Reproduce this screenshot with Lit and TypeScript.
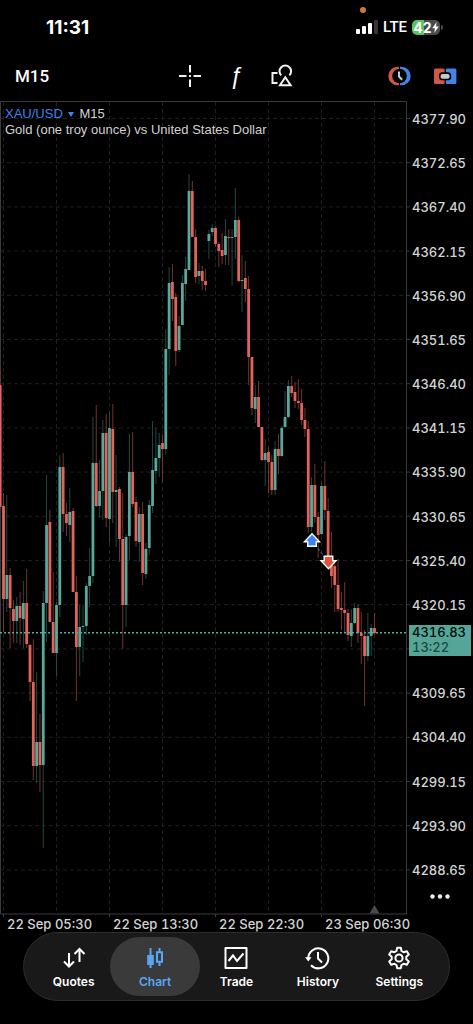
import { LitElement, html, svg, css } from "lit";
import { customElement, state } from "lit/decorators.js";

type Candle = [string, number, number, number, number];

// direction, high, body top, body bottom, low (plot units, one candle per slot)
const CANDLES: Candle[] = [
  ["d", 370, 385, 507, 507], ["d", 493, 506, 599, 632], ["u", 495, 575, 599, 612], ["d", 568, 575, 608, 648],
  ["d", 600, 609, 621, 643], ["u", 597, 606, 621, 643], ["d", 592, 606, 618, 645], ["u", 581, 603, 619, 648],
  ["d", 569, 603, 644, 648], ["d", 644, 645, 682, 701], ["d", 639, 682, 766, 780], ["u", 672, 742, 766, 783],
  ["d", 714, 742, 765, 792], ["u", 591, 603, 765, 848], ["u", 475, 525, 603, 642], ["d", 510, 522, 622, 622],
  ["d", 572, 622, 653, 653], ["u", 602, 605, 653, 676], ["u", 455, 467, 605, 617], ["d", 453, 467, 514, 532],
  ["d", 503, 514, 523, 536], ["u", 488, 512, 525, 542], ["d", 508, 511, 592, 592], ["d", 576, 592, 647, 701],
  ["u", 605, 627, 647, 676], ["u", 605, 626, 627, 662], ["u", 583, 586, 626, 635], ["u", 548, 576, 586, 607],
  ["u", 417, 463, 576, 583], ["d", 405, 463, 506, 507], ["u", 460, 491, 506, 518], ["u", 420, 433, 491, 520],
  ["d", 414, 433, 518, 527], ["u", 412, 428, 519, 543], ["d", 404, 429, 492, 523], ["u", 455, 490, 492, 547],
  ["d", 487, 489, 539, 562], ["d", 493, 539, 605, 649], ["u", 534, 537, 605, 627], ["u", 434, 472, 536, 560],
  ["d", 432, 472, 504, 507], ["d", 497, 502, 541, 547], ["u", 507, 514, 542, 562], ["d", 502, 514, 573, 585],
  ["u", 543, 549, 574, 579], ["u", 500, 505, 548, 555], ["u", 421, 470, 506, 513], ["u", 428, 458, 471, 484],
  ["u", 433, 445, 458, 477], ["d", 435, 443, 449, 482], ["u", 329, 349, 449, 454], ["u", 267, 283, 349, 375],
  ["d", 264, 282, 299, 321], ["d", 293, 297, 351, 366], ["u", 316, 326, 350, 352], ["u", 275, 283, 325, 325],
  ["u", 257, 269, 284, 301], ["u", 174, 191, 270, 270], ["d", 181, 191, 237, 237], ["d", 229, 237, 277, 283],
  ["u", 263, 271, 276, 284], ["d", 266, 271, 281, 290], ["d", 269, 281, 285, 291], ["u", 230, 234, 241, 259],
  ["u", 224, 228, 232, 236], ["d", 226, 228, 244, 247], ["d", 242, 244, 251, 267], ["d", 233, 250, 256, 264],
  ["u", 219, 236, 255, 265], ["d", 229, 237, 238, 265], ["u", 229, 237, 238, 286], ["u", 188, 220, 237, 259],
  ["d", 217, 220, 281, 282], ["u", 255, 280, 281, 312], ["d", 261, 278, 289, 302], ["d", 276, 289, 357, 385],
  ["d", 357, 357, 408, 415], ["u", 385, 397, 409, 423], ["d", 381, 397, 427, 427], ["d", 427, 427, 460, 461],
  ["u", 439, 453, 460, 486], ["d", 447, 452, 462, 493], ["d", 455, 462, 490, 495], ["u", 441, 449, 490, 495],
  ["d", 434, 449, 456, 474], ["u", 426, 428, 456, 457], ["u", 391, 417, 427, 428], ["u", 380, 386, 417, 418],
  ["d", 376, 386, 393, 397], ["d", 382, 392, 401, 408], ["d", 379, 401, 403, 409], ["d", 389, 403, 420, 425],
  ["d", 408, 420, 429, 437], ["d", 421, 429, 527, 533], ["u", 477, 485, 527, 532], ["d", 464, 485, 517, 523],
  ["d", 512, 517, 535, 558], ["u", 482, 486, 534, 535], ["d", 461, 486, 510, 520], ["d", 498, 511, 560, 567],
  ["d", 532, 560, 576, 588], ["d", 563, 566, 585, 612], ["d", 559, 585, 609, 612], ["d", 592, 608, 610, 630],
  ["d", 582, 610, 613, 633], ["d", 609, 613, 635, 641], ["u", 609, 623, 636, 647], ["u", 603, 608, 623, 624],
  ["d", 604, 608, 633, 643], ["d", 612, 633, 636, 664], ["d", 630, 636, 656, 706], ["u", 613, 636, 656, 661],
  ["u", 624, 628, 636, 656], ["d", 613, 628, 633, 635],
];

const STEP = 3.3125;
const TOP = 101;
const PRICES = [
  "4377.90", "4372.65", "4367.40", "4362.15", "4356.90", "4351.65", "4346.40", "4341.15", "4335.90",
  "4330.65", "4325.40", "4320.15", "", "4309.65", "4304.40", "4299.15", "4293.90", "4288.65",
];
const DATES = ["22 Sep 05:30", "22 Sep 13:30", "22 Sep 22:30", "23 Sep 06:30"];

@customElement("price-plot")
export class PricePlot extends LitElement {
  static styles = css`
    :host { display: block; min-width: 0; }
    .plot { display: block; width: 100%; height: 100%; overflow: visible; }
    .grid { stroke: #1e1f21; stroke-width: 1; stroke-dasharray: 4 3; fill: none; }
    .frame { stroke: #3a3a3c; stroke-width: 1; fill: none; }
    .up { fill: #58a89b; }
    .down { fill: #e0645b; }
    .wick-up { fill: #24483f; }
    .wick-down { fill: #74322e; }
    .last { stroke: #58a89b; stroke-width: 1.4; stroke-dasharray: 2 2; }
    .trade { stroke: #3878e0; stroke-width: 1; stroke-dasharray: 3 2; }
    .buy { fill: #3b82f6; stroke: #fff; stroke-width: 1.4; }
    .sell { fill: #e5533d; stroke: #fff; stroke-width: 1.4; }
    .shift { fill: #4b4b4b; }
  `;

  render() {
    const rows = PRICES.map((_, i) => 118.5 + i * 44.2);
    const cols = Array.from({ length: 8 }, (_, i) => 3.5 + i * 53);
    return html`
      <svg class="plot" viewBox="0 ${TOP} 407 813" preserveAspectRatio="none" role="img" aria-label="XAU/USD M15 candles">
        ${rows.map((y) => svg`<line class="grid" x1="0" x2="406" y1=${y} y2=${y} /><line class="frame" x1="407" x2="410" y1=${y} y2=${y} />`)}
        ${cols.map((x) => svg`<line class="grid" x1=${x} x2=${x} y1="102" y2="913" />`)}
        ${[0, 2, 4, 6].map((i) => svg`<line class="frame" x1=${cols[i]} x2=${cols[i]} y1="914" y2="917" />`)}
        <path class="frame" d="M.5 101.5H406.5V914H.5Z" />
        ${CANDLES.map(([dir, high, top, bottom, low], i) => {
          const x = 3.5 + (i - 1) * STEP;
          const up = dir === "u";
          return svg`
            <rect class=${up ? "wick-up" : "wick-down"} x=${x - 0.5} y=${high} width="1" height=${low - high} />
            <rect class=${up ? "up" : "down"} x=${x - 1.4} y=${top} width="2.8" height=${Math.max(bottom - top, 1)} />`;
        })}
        <line class="last" x1="0" x2="406" y1="632.8" y2="632.8" />
        <line class="trade" x1="312" y1="540" x2="328" y2="562" />
        <path class="buy" d="M312 533.7L319.5 541.7H316.3V546.3H307.7V541.7H304.5Z" />
        <path class="sell" d="M328.5 568.8L336 560.8H332.8V556.2H324.2V560.8H321Z" />
        <path class="shift" d="M374.5 905L379.5 913.5H369.5Z" />
      </svg>
    `;
  }
}

@customElement("app-root")
export class AppRoot extends LitElement {
  @state() private tab = "Chart";

  static styles = css`
    :host {
      display: flex;
      flex-direction: column;
      min-height: 100vh;
      box-sizing: border-box;
      padding-bottom: 23px;
      background: #000;
      color: #fff;
      font-family: Inter, "Liberation Sans", sans-serif;
    }
    button { appearance: none; border: 0; padding: 0; margin: 0; background: none; color: inherit; font: inherit; cursor: pointer; }
    svg { display: block; }
    .status { position: relative; display: flex; align-items: center; justify-content: space-between; height: 54px; padding: 0 30px 0 46px; }
    .clock { font-size: 19px; font-weight: 700; }
    .signals { display: flex; align-items: center; gap: 5px; }
    .lte { font: 500 15px/18px Roboto, sans-serif; }
    .battery { display: flex; align-items: center; gap: 1px; }
    .cell { display: flex; align-items: center; justify-content: center; width: 28px; height: 15px; border-radius: 5px; background: linear-gradient(90deg, #58c45c 42%, #4b4b4d 42%); font-size: 14px; font-weight: 700; line-height: 15px; }
    .nub { width: 2px; height: 5px; border-radius: 0 2px 2px 0; background: #4b4b4d; }
    .mic { position: absolute; top: 7px; right: 107px; width: 6px; height: 6px; border-radius: 50%; background: #c97a35; }

    .toolbar { display: grid; grid-template-columns: 1fr auto 1fr; align-items: center; height: 44px; margin-bottom: 3px; padding: 0 16px 0 15px; }
    .period { justify-self: start; font: 500 17px/24px Roboto, sans-serif; }
    .tools { display: flex; gap: 22px; }
    .right { justify-self: end; }
    .tool { display: flex; align-items: center; justify-content: center; width: 24px; height: 24px; }
    .fx { font: italic 400 23px/24px "Liberation Sans", sans-serif; }

    .chart { flex: 1; display: grid; grid-template-columns: minmax(0, 1fr) 66px; position: relative; min-height: 480px; }
    .heading { position: absolute; top: 5px; left: 5px; font: 400 13px/16px "Liberation Sans", sans-serif; color: #d2d2d2; }
    .symbol { color: #3f84f0; display: inline-flex; align-items: center; gap: 5px; margin-right: 2px; }
    .axis { display: flex; flex-direction: column; }
    .prices { flex: 1; display: flex; flex-direction: column; justify-content: space-between; list-style: none; margin: 0; padding: 10px 0 0 5px; font-size: 13px; line-height: 16px; font-weight: 500; font-variant-numeric: tabular-nums; color: #d4d4d4; }
    .price { height: 16px; position: relative; }
    .tag { position: absolute; right: 2px; left: -3px; bottom: 1px; padding: 0 3px; height: 31px; background: #55a598; color: #06100e; line-height: 15px; }
    .left { display: block; color: #1c4a43; }
    .more { display: flex; align-items: center; justify-content: center; height: 36px; }
    .dates { display: grid; grid-template-columns: repeat(4, 1fr); height: 18px; padding: 0 42px 0 7px; font-size: 13px; line-height: 20px; font-weight: 500; font-variant-numeric: tabular-nums; color: #d4d4d4; white-space: nowrap; }

    .tabs { display: grid; grid-template-columns: repeat(5, 1fr); margin: 0 23px; padding: 4px 9px; border: 1px solid #2d2d2d; border-radius: 35px; background: #191919; }
    .tab { display: flex; flex-direction: column; align-items: center; gap: 4px; height: 59px; margin: 0 -4px; padding-top: 9px; box-sizing: border-box; border-radius: 30px; font-size: 12px; line-height: 16px; font-weight: 600; }
    .active { background: #3a3a3a; color: #58a6f5; }
  `;

  private icon(name: string) {
    const shapes: Record<string, unknown> = {
      Quotes: svg`<path d="M7 7V20M2 15.5L7 20.5L12 15.5M17.5 16V3.5M12.5 8L17.5 3L22.5 8" fill="none" stroke="currentColor" stroke-width="2" />`,
      Chart: svg`<path d="M7.5 2V22M16.5 2V7M16.5 16V20" stroke="currentColor" stroke-width="2" /><path d="M4.2 9H10.8V19H4.2Z" fill="currentColor" /><path d="M14 6.3H19V15.7H14Z" fill="none" stroke="currentColor" stroke-width="2" />`,
      Trade: svg`<path d="M1.5 2H22.5V22H1.5Z" fill="none" stroke="currentColor" stroke-width="2" stroke-linejoin="round" /><path d="M4.5 15L9 9.5L13 15L19.5 7.5" fill="none" stroke="currentColor" stroke-width="2" />`,
      History: svg`<path d="M2.3 12.5A10 10 0 1 1 5 19.2" fill="none" stroke="currentColor" stroke-width="2" /><path d="M-1 11.2H5.6L2.3 15.4Z" fill="currentColor" /><path d="M12 6V12.5L16 16.5" fill="none" stroke="currentColor" stroke-width="2" />`,
      Settings: svg`<path d="M10.2 1.8H13.8L14.5 5L16.6 6.2L19.8 5.2L21.8 8.6L19.3 10.8V13.2L21.8 15.4L19.8 18.8L16.6 17.8L14.5 19L13.8 22.2H10.2L9.5 19L7.4 17.8L4.2 18.8L2.2 15.4L4.7 13.2V10.8L2.2 8.6L4.2 5.2L7.4 6.2L9.5 5Z" fill="none" stroke="currentColor" stroke-width="2" stroke-linejoin="round" /><circle cx="12" cy="12" r="3.6" fill="none" stroke="currentColor" stroke-width="2" />`,
    };
    return html`<svg width="24" height="24" viewBox="0 0 24 24" overflow="visible" aria-hidden="true">${shapes[name]}</svg>`;
  }

  render() {
    return html`
      <header class="status">
        <span class="mic"></span>
        <span class="clock">11:31</span>
        <div class="signals">
          <svg width="22" height="14" viewBox="0 0 22 14" aria-hidden="true">
            <rect x="0" y="9" width="4" height="5" rx="1" fill="#fff" />
            <rect x="6" y="6" width="4" height="8" rx="1" fill="#fff" />
            <rect x="12" y="3" width="4" height="11" rx="1" fill="#fff" />
            <rect x="18" y="0" width="4" height="14" rx="1" fill="#363636" />
          </svg>
          <span class="lte">LTE</span>
          <span class="battery">
            <span class="cell">42<svg width="7" height="11" viewBox="0 0 7 11" aria-hidden="true"><path d="M4.6 0L.3 6.2H3L2.2 11L6.8 4.6H4Z" fill="#fff" /></svg></span>
            <span class="nub"></span>
          </span>
        </div>
      </header>

      <div class="toolbar">
        <button class="period">M15</button>
        <div class="tools">
          <button class="tool" aria-label="Crosshair">
            <svg width="24" height="24" viewBox="0 0 24 24"><path d="M12 1V8.5M12 15.5V23M1 12H8.5M15.5 12H23M11 12H13" stroke="#f2f2f2" stroke-width="2" /></svg>
          </button>
          <button class="tool fx" aria-label="Indicators">ƒ</button>
          <button class="tool" aria-label="Objects">
            <svg width="24" height="24" viewBox="0 0 24 24"><path d="M7.5 9H2.5V19H7.5" fill="none" stroke="#f2f2f2" stroke-width="2" /><path d="M11.2 11.4A5.8 5.8 0 1 1 19.4 11.4M15.3 13.2L20.6 21.2H10Z" fill="none" stroke="#f2f2f2" stroke-width="2" /></svg>
          </button>
        </div>
        <div class="tools right">
          <button class="tool" aria-label="Sessions">
            <svg width="24" height="24" viewBox="0 0 24 24"><path d="M12 2.8H10.5A9.2 9.2 0 0 0 10.5 21.2H12Z" fill="#cf5848" /><path d="M13 2.8H14.5A9.2 9.2 0 0 1 14.5 21.2H13Z" fill="#4583e6" /><circle cx="12.5" cy="12" r="7.3" fill="#000" /><path d="M12 7.5V12.5L15.2 15.8" fill="none" stroke="#c3cccd" stroke-width="2" /></svg>
          </button>
          <button class="tool" aria-label="One click trading">
            <svg width="24" height="24" viewBox="0 0 24 24"><rect x="1" y="4.6" width="11" height="15.4" rx="1.5" fill="#cf5848" /><rect x="12.6" y="4.6" width="10.8" height="15.4" rx="1.5" fill="#4583e6" /><path d="M11.6 4.6H12.6V20H11.6Z" fill="#000" /><rect x="6.8" y="9.1" width="10.6" height="6.4" rx="2.6" fill="#c3cccd" stroke="#000" stroke-width="1.6" /></svg>
          </button>
        </div>
      </div>

      <main class="chart">
        <price-plot></price-plot>
        <div class="heading">
          <button class="symbol">XAU/USD <svg width="6" height="5" viewBox="0 0 6 5"><path d="M0 0H6L3 5Z" fill="currentColor" /></svg></button>
          <span>M15</span>
          <div>Gold (one troy ounce) vs United States Dollar</div>
        </div>
        <div class="axis">
          <ul class="prices">
            ${PRICES.map((p) => html`<li class="price">${p || html`<span class="tag">4316.83<span class="left">13:22</span></span>`}</li>`)}
          </ul>
          <button class="more" aria-label="More">
            <svg width="20" height="5" viewBox="0 0 20 5"><circle cx="2.5" cy="2.5" r="2.2" fill="#eee" /><circle cx="10" cy="2.5" r="2.2" fill="#eee" /><circle cx="17.5" cy="2.5" r="2.2" fill="#eee" /></svg>
          </button>
        </div>
      </main>
      <div class="dates">${DATES.map((d) => html`<span>${d}</span>`)}</div>

      <nav class="tabs">
        ${["Quotes", "Chart", "Trade", "History", "Settings"].map(
          (t) => html`<button class="tab ${t === this.tab ? "active" : ""}" @click=${() => (this.tab = t)}>${this.icon(t)}<span>${t}</span></button>`
        )}
      </nav>
    `;
  }
}
